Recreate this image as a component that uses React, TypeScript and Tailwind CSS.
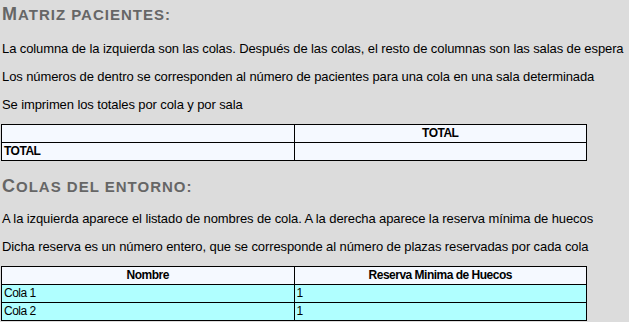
import React from "react";

const pacientesInfo = [
  "La columna de la izquierda son las colas. Después de las colas, el resto de columnas son las salas de espera",
  "Los números de dentro se corresponden al número de pacientes para una cola en una sala determinada",
  "Se imprimen los totales por cola y por sala",
];

const colasInfo = [
  "A la izquierda aparece el listado de nombres de cola. A la derecha aparece la reserva mínima de huecos",
  "Dicha reserva es un número entero, que se corresponde al número de plazas reservadas por cada cola",
];

const colas = [
  { nombre: "Cola 1", reserva: 1 },
  { nombre: "Cola 2", reserva: 1 },
];

// versalitas: inicial grande y el resto en mayúsculas más pequeñas
function Titulo({ texto }: { texto: string }) {
  return (
    <h2 className="ml-[2px] h-[22px] leading-[22px] font-bold text-[#666666] tracking-[1px] uppercase">
      <span className="text-[18px]">{texto.charAt(0)}</span>
      <span className="text-[15px]">{texto.slice(1)}</span>
    </h2>
  );
}

function Parrafos({ lineas }: { lineas: string[] }) {
  return (
    <div className="ml-[2px] flex flex-col gap-[13px] text-[13px] tracking-[-0.1px] whitespace-nowrap">
      {lineas.map((t) => (
        <p key={t} className="leading-[15px]">{t}</p>
      ))}
    </div>
  );
}

const cell = "border border-black px-[2px] py-0 h-[18px] leading-[15px] text-[12px] tracking-[-0.5px] text-black";

export default function App() {
  return (
    <div className="min-h-[322px] bg-[#dcdcdc] font-['Liberation_Sans',Arial,sans-serif] text-black pt-[3px]">
      <Titulo texto="Matriz pacientes:" />
      <div className="mt-[16px]">
        <Parrafos lineas={pacientesInfo} />
      </div>

      <table className="mt-[12px] ml-[1px] w-[586px] border-collapse table-fixed bg-[#f5f9ff]">
        <tbody>
          <tr>
            <td className={cell}></td>
            <td className={`${cell} text-center font-bold`}>TOTAL</td>
          </tr>
          <tr>
            <td className={`${cell} font-bold`}>TOTAL</td>
            <td className={cell}></td>
          </tr>
        </tbody>
      </table>

      <div className="mt-[14px]">
        <Titulo texto="Colas del entorno:" />
      </div>
      <div className="mt-[14px]">
        <Parrafos lineas={colasInfo} />
      </div>

      <table className="mt-[12px] ml-[1px] w-[586px] border-collapse table-fixed">
        <thead>
          <tr className="bg-[#f5f9ff]">
            <th className={`${cell} font-bold`}>Nombre</th>
            <th className={`${cell} font-bold`}>Reserva Minima de Huecos</th>
          </tr>
        </thead>
        <tbody>
          {colas.map((c) => (
            <tr key={c.nombre} className="bg-[#b0ffff]">
              <td className={cell}>{c.nombre}</td>
              <td className={cell}>{c.reserva}</td>
            </tr>
          ))}
        </tbody>
      </table>
    </div>
  );
}
